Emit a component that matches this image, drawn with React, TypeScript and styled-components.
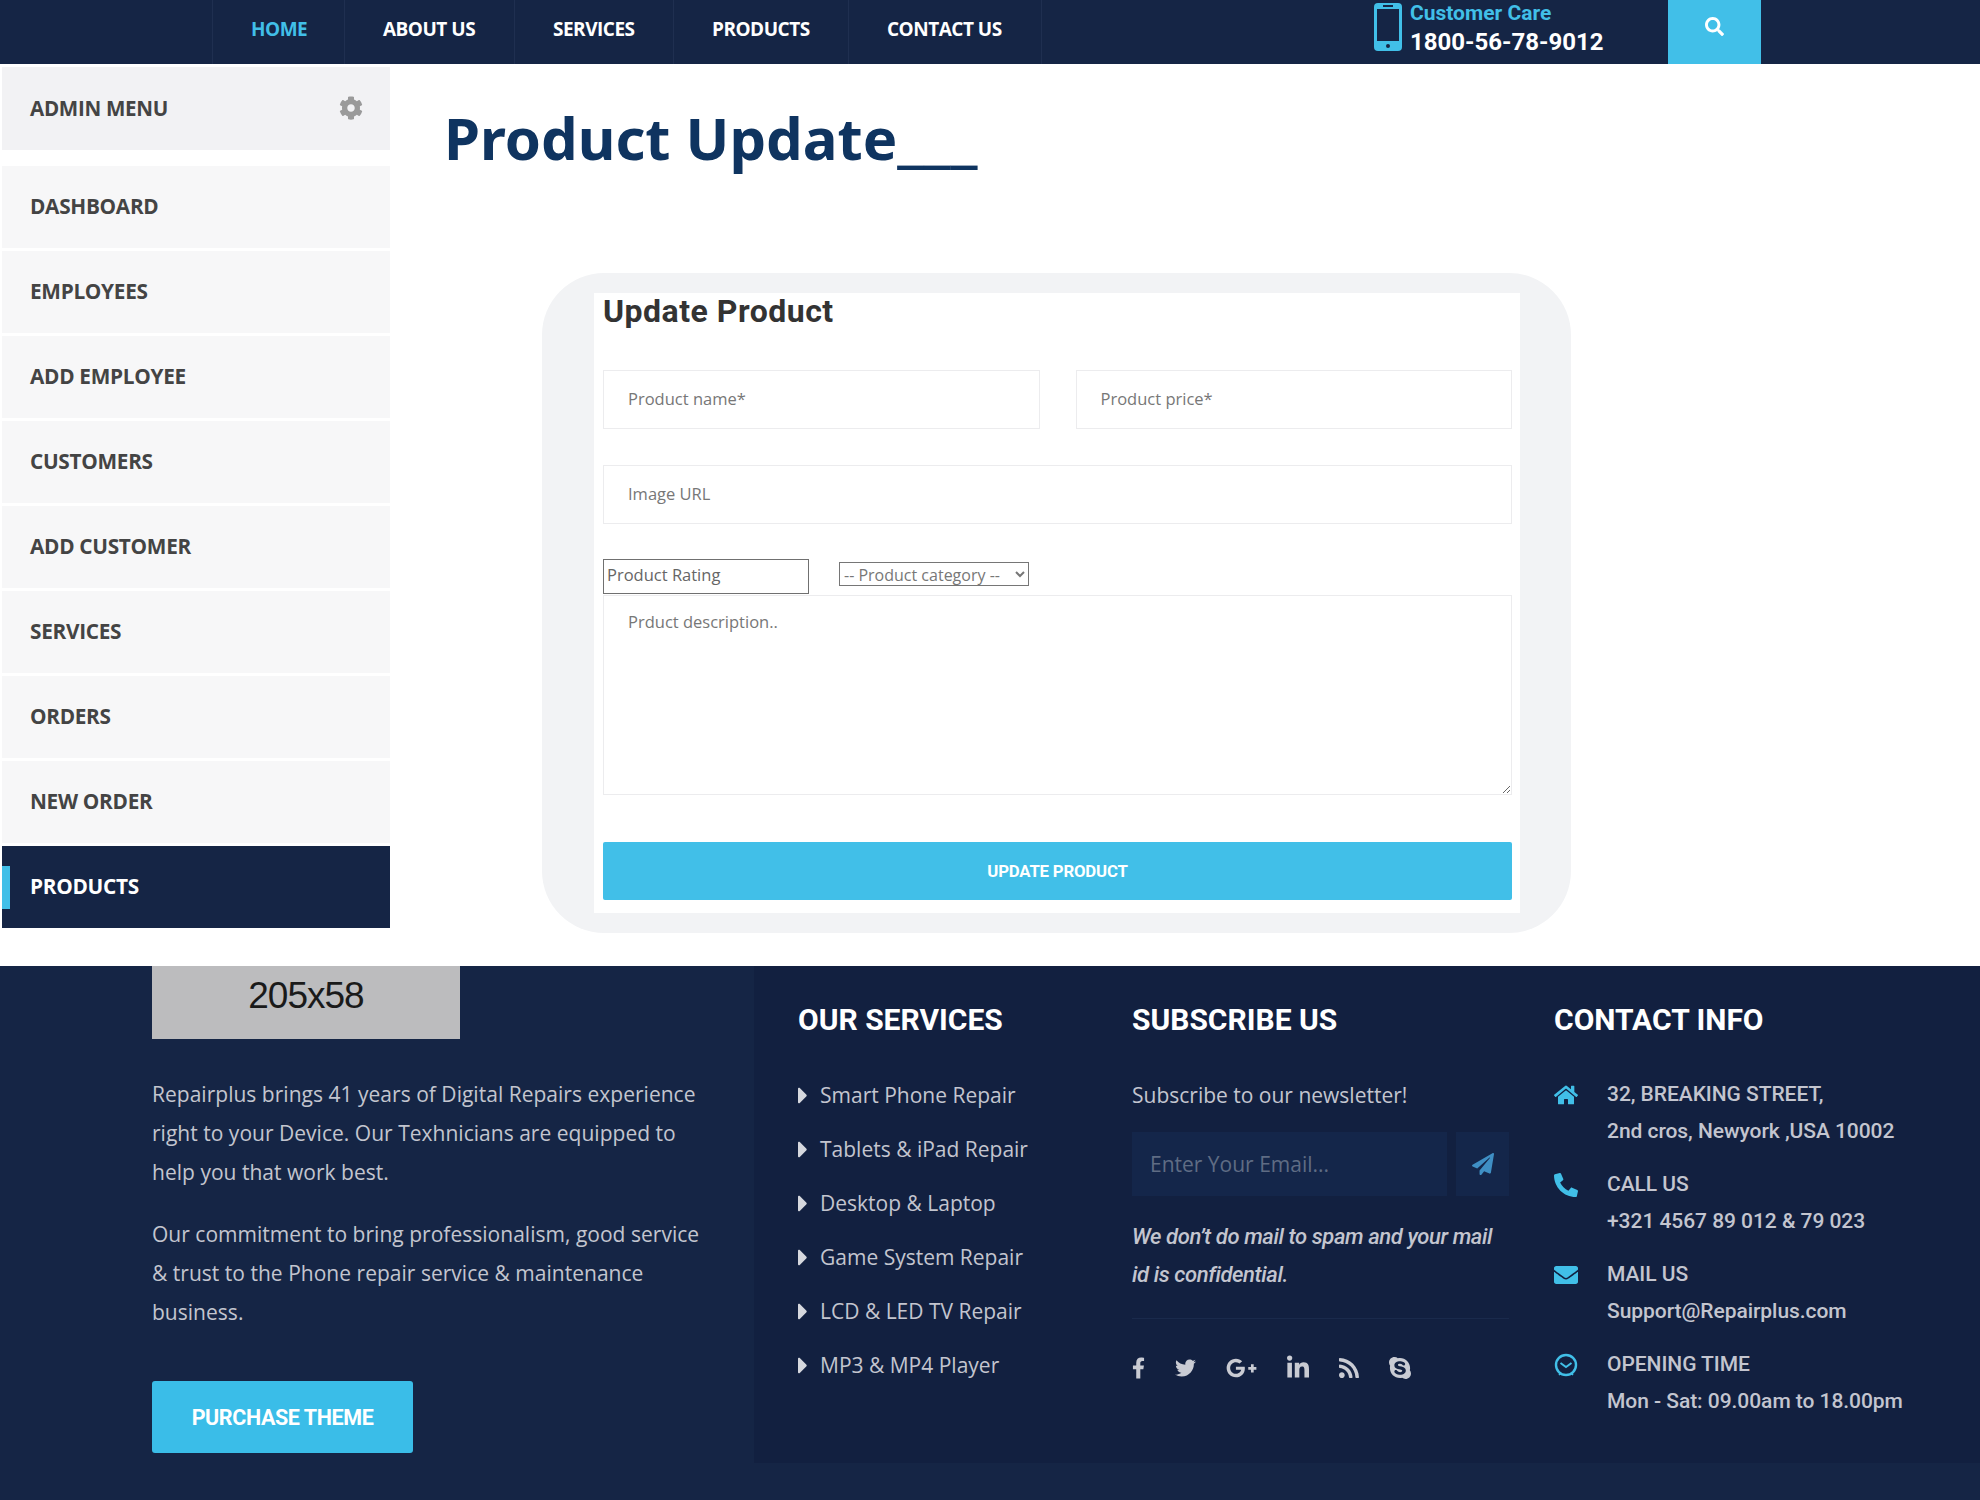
import React from 'react';
import styled, { createGlobalStyle } from 'styled-components';
import {
  FaCaretRight,
  FaCog,
  FaEnvelope,
  FaFacebookF,
  FaGooglePlusG,
  FaHome,
  FaLinkedinIn,
  FaPaperPlane,
  FaPhone,
  FaRss,
  FaSearch,
  FaSkype,
  FaTwitter,
} from 'react-icons/fa';

const navy = '#152545';
const navyDark = '#122040';
const cyan = '#41bfe8';
const footerText = '#c3c5cf';

const navLinks = ['HOME', 'ABOUT US', 'SERVICES', 'PRODUCTS', 'CONTACT US'];
const navWidths = [132, 170, 159, 175, 193];
const menuItems = [
  'DASHBOARD',
  'EMPLOYEES',
  'ADD EMPLOYEE',
  'CUSTOMERS',
  'ADD CUSTOMER',
  'SERVICES',
  'ORDERS',
  'NEW ORDER',
  'PRODUCTS',
];
const services = [
  'Smart Phone Repair',
  'Tablets & iPad Repair',
  'Desktop & Laptop',
  'Game System Repair',
  'LCD & LED TV Repair',
  'MP3 & MP4 Player',
];
const socials = [
  { name: 'facebook', Icon: FaFacebookF, width: 13 },
  { name: 'twitter', Icon: FaTwitter, width: 21 },
  { name: 'google', Icon: FaGooglePlusG, width: 31 },
  { name: 'linkedin', Icon: FaLinkedinIn, width: 22 },
  { name: 'rss', Icon: FaRss, width: 20 },
  { name: 'skype', Icon: FaSkype, width: 22 },
];

const GlobalStyle = createGlobalStyle`
  html, body {
    margin: 0;
    padding: 0;
    background: #fff;
  }

  * {
    box-sizing: border-box;
  }
`;

const Page = styled.div`
  width: 1980px;
  height: 1500px;
  overflow: hidden;
  display: flex;
  flex-direction: column;
  font-family: 'Open Sans', sans-serif;
`;

const TopBar = styled.header`
  height: 64px;
  background: ${navy};
  display: flex;
  padding-left: 212px;
`;

const NavList = styled.nav`
  display: flex;
  border-left: 1px solid #1f2f50;
`;

const NavLink = styled.a<{ $active?: boolean; $width: number }>`
  width: ${({ $width }) => $width}px;
  display: flex;
  align-items: center;
  padding-left: 38px;
  padding-bottom: 6px;
  border-right: 1px solid #1f2f50;
  color: ${({ $active }) => ($active ? cyan : '#fff')};
  font-size: 19px;
  font-weight: 700;
  letter-spacing: -0.5px;
`;

const CareBlock = styled.div`
  margin-left: 332px;
  width: 294px;
  display: flex;
  gap: 8px;
  padding-top: 3px;
`;

const CareText = styled.div`
  display: flex;
  flex-direction: column;
  font-family: 'Roboto', sans-serif;
  font-weight: 700;
`;

const CareLabel = styled.span`
  color: ${cyan};
  font-size: 21px;
  line-height: 21px;
`;

const CareNumber = styled.span`
  color: #fff;
  font-size: 24px;
  line-height: 37px;
`;

const SearchTile = styled.div`
  width: 93px;
  background: ${cyan};
  color: #fff;
  display: flex;
  align-items: center;
  justify-content: center;
  padding-bottom: 12px;
  font-size: 19px;
`;

const Main = styled.main`
  height: 902px;
  display: flex;
`;

const Sidebar = styled.aside`
  width: 388px;
  margin-left: 2px;
  padding-top: 3px;
  display: flex;
  flex-direction: column;
  gap: 3px;
  flex-shrink: 0;
`;

const AdminMenu = styled.div`
  height: 83px;
  margin-bottom: 13px;
  background: #f2f2f4;
  display: flex;
  align-items: center;
  justify-content: space-between;
  padding: 0 27px 2px 28px;
  color: #444;
  font-size: 20.6px;
  font-weight: 700;
  letter-spacing: -0.3px;

  svg {
    color: #9a9a9a;
    font-size: 24px;
  }
`;

const MenuRow = styled.div<{ $active?: boolean }>`
  position: relative;
  height: 82px;
  display: flex;
  align-items: center;
  padding: 0 0 2px 28px;
  background: ${({ $active }) => ($active ? navy : '#f7f7f8')};
  color: ${({ $active }) => ($active ? '#fff' : '#444')};
  font-size: 20.8px;
  font-weight: 700;
  letter-spacing: -0.3px;

  &::before {
    content: '';
    display: ${({ $active }) => ($active ? 'block' : 'none')};
    position: absolute;
    left: 0;
    top: 20px;
    width: 8px;
    height: 43px;
    background: ${cyan};
  }
`;

const Content = styled.section`
  flex: 1;
`;

const PageTitle = styled.h1`
  margin: 39px 0 0 54px;
  height: 70px;
  color: #0f3460;
  font-family: 'Noto Sans', sans-serif;
  font-size: 58px;
  line-height: 70px;
  font-weight: 700;
`;

const TitleRule = styled.span`
  font-size: 65px;
  line-height: 0;
`;

const FormShell = styled.div`
  width: 1029px;
  height: 660px;
  margin: 100px 0 0 152px;
  padding: 20px 51px 20px 52px;
  background: #f2f3f5;
  border-radius: 62px;
`;

const FormCard = styled.form`
  height: 620px;
  background: #fff;
  padding: 0 8px 0 9px;
`;

const FormTitle = styled.h2`
  margin: 0;
  height: 77px;
  padding-top: 1px;
  color: #333;
  font-family: 'Roboto', sans-serif;
  font-size: 32px;
  line-height: 34px;
  font-weight: 700;
  letter-spacing: 0.5px;
`;

const FieldRow = styled.div`
  display: flex;
  gap: 36px;
  margin-bottom: 36px;
`;

const TextField = styled.input`
  flex: 1;
  min-width: 0;
  height: 59px;
  padding: 0 24px 2px;
  border: 1px solid #ececee;
  background: #fff;
  font-family: 'Open Sans', sans-serif;
  font-size: 16.5px;
  outline: none;

  &::placeholder {
    color: #777;
    opacity: 1;
  }
`;

const PickerRow = styled.div`
  display: flex;
  height: 35px;
  gap: 30px;
`;

const RatingField = styled.input`
  width: 206px;
  height: 35px;
  padding: 0 3px 4px;
  margin-top: -1px;
  border: 1px solid #707070;
  font-family: 'Open Sans', sans-serif;
  font-size: 16.5px;
  outline: none;

  &::placeholder {
    color: #666;
    opacity: 1;
  }
`;

const CategorySelect = styled.select`
  width: 190px;
  height: 24px;
  margin-top: 2px;
  padding: 0;
  border: 1px solid #767676;
  border-radius: 0;
  background: #fff;
  color: #777;
  font-family: 'Open Sans', sans-serif;
  font-size: 16px;
`;

const DescriptionField = styled.textarea`
  display: block;
  width: 100%;
  height: 200px;
  padding: 14px 24px;
  border: 1px solid #ececee;
  font-family: 'Open Sans', sans-serif;
  font-size: 16.5px;
  outline: none;

  &::placeholder {
    color: #777;
    opacity: 1;
  }
`;

const SubmitButton = styled.button`
  display: block;
  width: 100%;
  height: 58px;
  margin-top: 47px;
  border: 0;
  border-radius: 2px;
  background: ${cyan};
  color: #fff;
  font-family: 'Roboto', sans-serif;
  font-size: 16.8px;
  font-weight: 700;
  letter-spacing: -0.2px;
`;

const Footer = styled.footer`
  height: 534px;
  background: ${navy};
  display: flex;
  color: ${footerText};
`;

const AboutColumn = styled.div`
  width: 754px;
  padding-left: 152px;
  flex-shrink: 0;
`;

const LogoHolder = styled.div`
  width: 308px;
  height: 73px;
  padding-bottom: 13px;
  background: #bcbcbe;
  color: #1a1a1a;
  display: flex;
  align-items: center;
  justify-content: center;
  font-family: 'Liberation Sans', sans-serif;
  font-size: 37px;
  letter-spacing: -1px;
  margin-bottom: 36px;
`;

const AboutText = styled.p`
  width: 555px;
  margin: 0 0 23px;
  font-size: 21px;
  line-height: 39px;
  letter-spacing: 0.02px;
`;

const PurchaseButton = styled.a`
  width: 261px;
  height: 72px;
  margin-top: 49px;
  border-radius: 3px;
  background: #3abde8;
  color: #fff;
  display: flex;
  align-items: center;
  justify-content: center;
  font-family: 'Roboto', sans-serif;
  font-size: 21.5px;
  font-weight: 700;
  letter-spacing: -0.4px;
`;

const FooterPanel = styled.div`
  flex: 1;
  height: 497px;
  background: ${navyDark};
  display: flex;
  padding: 36px 0 0 44px;
`;

const ServicesColumn = styled.div`
  width: 334px;
`;

const SubscribeColumn = styled.div`
  width: 377px;
  margin-right: 45px;
`;

const ContactColumn = styled.div`
  flex: 1;
`;

const ColumnTitle = styled.h3<{ $after?: number }>`
  margin: 0 0 ${({ $after }) => $after ?? 30}px;
  color: #fff;
  font-family: 'Roboto', sans-serif;
  font-size: 30px;
  line-height: 36px;
  font-weight: 700;
`;

const ServiceItem = styled.div`
  height: 54px;
  display: flex;
  align-items: center;
  gap: 12px;
  font-size: 21px;

  svg {
    width: 10px;
    height: 27px;
    color: #d6d8de;
  }
`;

const SubscribeLead = styled.div`
  height: 54px;
  margin-bottom: 10px;
  display: flex;
  align-items: center;
  font-size: 21px;
`;

const SubscribeForm = styled.div`
  display: flex;
  gap: 9px;
  height: 64px;
  margin-bottom: 22px;
`;

const EmailField = styled.input`
  width: 315px;
  height: 64px;
  padding: 0 18px;
  border: 0;
  background: #14264a;
  color: #fff;
  font-family: 'Open Sans', sans-serif;
  font-size: 21px;
  outline: none;

  &::placeholder {
    color: #5f6c84;
    opacity: 1;
  }
`;

const SendButton = styled.button`
  width: 53px;
  height: 64px;
  border: 0;
  background: #14264a;
  color: #3f8fc4;
  font-size: 22px;
  display: flex;
  align-items: center;
  justify-content: center;
`;

const SpamNote = styled.p`
  margin: 0;
  padding-bottom: 24px;
  border-bottom: 1px solid #1a2a4c;
  font-family: 'Roboto', sans-serif;
  font-size: 22px;
  line-height: 38px;
  font-style: italic;
  font-weight: 500;
  letter-spacing: -0.4px;
`;

const SocialRow = styled.div`
  display: flex;
  align-items: center;
  height: 30px;
  margin-top: 34px;
  gap: 30px;
  color: #c9cbd3;
`;

const SocialLink = styled.a<{ $width: number }>`
  display: flex;
  width: ${({ $width }) => $width}px;
  height: 26px;

  svg {
    width: 100%;
    height: 100%;
  }
`;

const ContactItem = styled.div`
  display: flex;
  gap: 29px;
  margin-bottom: 16px;
`;

const ContactIcon = styled.div`
  width: 24px;
  height: 37px;
  display: flex;
  align-items: center;
  color: ${cyan};
  font-size: 24px;
`;

const ContactLines = styled.div`
  font-family: 'Roboto', sans-serif;
  font-size: 21px;
  line-height: 37px;
  font-weight: 500;
  letter-spacing: -0.05px;
`;

const ContactLine = styled.div``;

const FlippedPhone = styled(FaPhone)`
  transform: scaleX(-1);
`;

const MobileIcon = () => (
  <svg width="28" height="48" viewBox="0 0 28 48">
    <rect width="28" height="48" rx="4" fill={cyan} />
    <rect x="3" y="6" width="22" height="32" fill={navy} />
    <rect x="9" y="2" width="10" height="2" fill={navy} />
    <circle cx="14" cy="43" r="2" fill={navy} />
  </svg>
);

const ClockIcon = () => (
  <svg width="24" height="24" viewBox="0 0 24 24" fill="none" stroke={cyan} strokeWidth="2.4">
    <circle cx="12" cy="12" r="10" />
    <path d="M6.5 10 12 14l5.5-4" strokeWidth="2" />
    <path d="M5 22l2-2M19 22l-2-2" strokeWidth="1.6" />
  </svg>
);

export default function App() {
  return (
    <Page>
      <GlobalStyle />
      <TopBar>
        <NavList>
          {navLinks.map((link, index) => (
            <NavLink key={link} $active={index === 0} $width={navWidths[index]}>
              {link}
            </NavLink>
          ))}
        </NavList>
        <CareBlock>
          <MobileIcon />
          <CareText>
            <CareLabel>Customer Care</CareLabel>
            <CareNumber>1800-56-78-9012</CareNumber>
          </CareText>
        </CareBlock>
        <SearchTile>
          <FaSearch />
        </SearchTile>
      </TopBar>

      <Main>
        <Sidebar>
          <AdminMenu>
            ADMIN MENU
            <FaCog />
          </AdminMenu>
          {menuItems.map((item) => (
            <MenuRow key={item} $active={item === 'PRODUCTS'}>
              {item}
            </MenuRow>
          ))}
        </Sidebar>
        <Content>
          <PageTitle>
            Product Update<TitleRule>___</TitleRule>
          </PageTitle>
          <FormShell>
            <FormCard>
              <FormTitle>Update Product</FormTitle>
              <FieldRow>
                <TextField placeholder="Product name*" />
                <TextField placeholder="Product price*" />
              </FieldRow>
              <FieldRow>
                <TextField placeholder="Image URL" />
              </FieldRow>
              <PickerRow>
                <RatingField placeholder="Product Rating" />
                <CategorySelect defaultValue="">
                  <option value="">-- Product category --</option>
                </CategorySelect>
              </PickerRow>
              <DescriptionField placeholder="Prduct description.." />
              <SubmitButton type="button">UPDATE PRODUCT</SubmitButton>
            </FormCard>
          </FormShell>
        </Content>
      </Main>

      <Footer>
        <AboutColumn>
          <LogoHolder>205x58</LogoHolder>
          <AboutText>
            Repairplus brings 41 years of Digital Repairs experience right to your Device. Our
            Texhnicians are equipped to help you that work best.
          </AboutText>
          <AboutText>
            Our commitment to bring professionalism, good service &amp; trust to the Phone repair
            service &amp; maintenance business.
          </AboutText>
          <PurchaseButton>PURCHASE THEME</PurchaseButton>
        </AboutColumn>
        <FooterPanel>
          <ServicesColumn>
            <ColumnTitle>OUR SERVICES</ColumnTitle>
            {services.map((service) => (
              <ServiceItem key={service}>
                <FaCaretRight />
                {service}
              </ServiceItem>
            ))}
          </ServicesColumn>
          <SubscribeColumn>
            <ColumnTitle>SUBSCRIBE US</ColumnTitle>
            <SubscribeLead>Subscribe to our newsletter!</SubscribeLead>
            <SubscribeForm>
              <EmailField placeholder="Enter Your Email..." />
              <SendButton type="button">
                <FaPaperPlane />
              </SendButton>
            </SubscribeForm>
            <SpamNote>We don’t do mail to spam and your mail id is confidential.</SpamNote>
            <SocialRow>
              {socials.map(({ name, Icon, width }) => (
                <SocialLink key={name} $width={width}>
                  <Icon />
                </SocialLink>
              ))}
            </SocialRow>
          </SubscribeColumn>
          <ContactColumn>
            <ColumnTitle $after={38}>CONTACT INFO</ColumnTitle>
            <ContactItem>
              <ContactIcon>
                <FaHome />
              </ContactIcon>
              <ContactLines>
                <ContactLine>32, BREAKING STREET,</ContactLine>
                <ContactLine>2nd cros, Newyork ,USA 10002</ContactLine>
              </ContactLines>
            </ContactItem>
            <ContactItem>
              <ContactIcon>
                <FlippedPhone />
              </ContactIcon>
              <ContactLines>
                <ContactLine>CALL US</ContactLine>
                <ContactLine>+321 4567 89 012 &amp; 79 023</ContactLine>
              </ContactLines>
            </ContactItem>
            <ContactItem>
              <ContactIcon>
                <FaEnvelope />
              </ContactIcon>
              <ContactLines>
                <ContactLine>MAIL US</ContactLine>
                <ContactLine>Support@Repairplus.com</ContactLine>
              </ContactLines>
            </ContactItem>
            <ContactItem>
              <ContactIcon>
                <ClockIcon />
              </ContactIcon>
              <ContactLines>
                <ContactLine>OPENING TIME</ContactLine>
                <ContactLine>Mon - Sat: 09.00am to 18.00pm</ContactLine>
              </ContactLines>
            </ContactItem>
          </ContactColumn>
        </FooterPanel>
      </Footer>
    </Page>
  );
}
